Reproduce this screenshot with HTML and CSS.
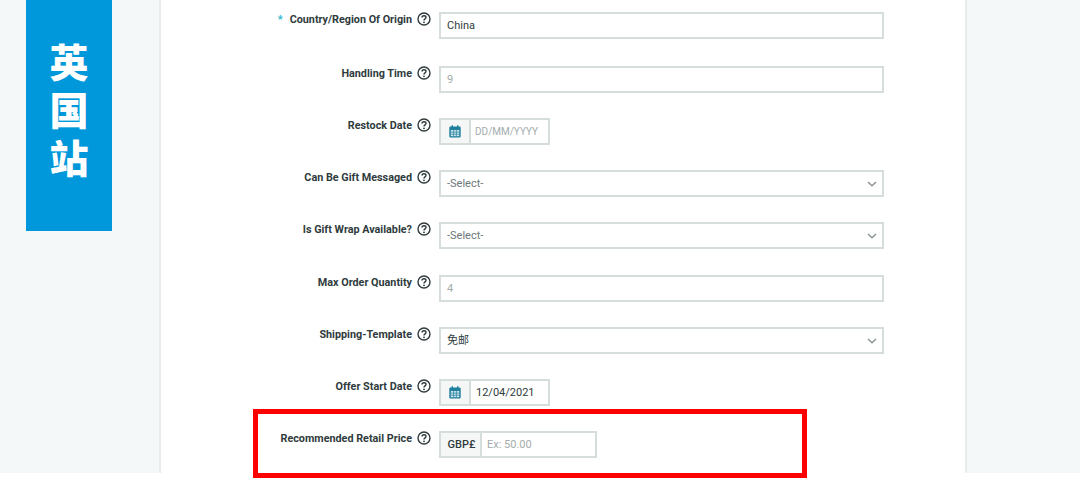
FILE: index.html
```html
<!DOCTYPE html>
<html lang="en">
<head>
<meta charset="utf-8">
<title>Offer details</title>
<link rel="stylesheet" href="styles.css">
</head>
<body>
<svg class="defs" width="0" height="0" aria-hidden="true">
  <symbol id="help" viewBox="0 0 14 14">
    <circle cx="7" cy="7" r="6" fill="none" stroke="#2f3b3d" stroke-width="1.4"/>
    <path d="M5 5.6c0-1.2.9-1.9 2-1.9s2 .7 2 1.700c0 1.500-2 1.500-2 3" fill="none" stroke="#2f3b3d" stroke-width="1.400"/>
    <circle cx="7" cy="10.300" r=".9" fill="#2f3b3d"/>
  </symbol>
  <symbol id="cal" viewBox="0 0 12 13">
    <path d="M1.500 1.500h9a1.200 1.200 0 0 1 1.200 1.200v8.600a1.200 1.200 0 0 1-1.200 1.200h-9A1.200 1.200 0 0 1 .3 11.300V2.700a1.200 1.200 0 0 1 1.200-1.200z" fill="#1f7f9c"/>
    <rect x="2.600" y=".2" width="1.400" height="2.300" fill="#1f7f9c"/>
    <rect x="8" y=".2" width="1.400" height="2.300" fill="#1f7f9c"/>
    <path d="M1.800 5h8.400v6.200H1.800z" fill="#cfe6ec"/>
    <path d="M1.800 7.100h8.400M1.800 9.200h8.400M4.600 5v6.200M7.400 5v6.200" stroke="#1f7f9c" stroke-width=".7"/>
  </symbol>
  <symbol id="chev" viewBox="0 0 10 6">
    <path d="M1 1l4 3.700L9 1" fill="none" stroke="#8c9698" stroke-width="1.500"/>
  </symbol>
</svg>

<div class="page">
  <aside class="gutter">
    <div class="banner"><span>英</span><span>国</span><span>站</span></div>
  </aside>

  <main class="panel">
    <form class="form">
      <div class="row row-54">
        <div class="label"><span class="req">*</span>Country/Region Of Origin</div>
        <svg class="help"><use href="#help"/></svg>
        <div class="field"><span class="value">China</span></div>
      </div>
      <div class="row row-52">
        <div class="label">Handling Time</div>
        <svg class="help"><use href="#help"/></svg>
        <div class="field"><span class="hint">9</span></div>
      </div>
      <div class="row row-52">
        <div class="label">Restock Date</div>
        <svg class="help"><use href="#help"/></svg>
        <div class="group group-date">
          <span class="addon"><svg class="cal"><use href="#cal"/></svg></span>
          <span class="hint hint-date">DD/MM/YYYY</span>
        </div>
      </div>
      <div class="row row-52">
        <div class="label">Can Be Gift Messaged</div>
        <svg class="help"><use href="#help"/></svg>
        <div class="field select"><span class="muted">-Select-</span><svg class="chev"><use href="#chev"/></svg></div>
      </div>
      <div class="row row-53">
        <div class="label">Is Gift Wrap Available?</div>
        <svg class="help"><use href="#help"/></svg>
        <div class="field select"><span class="muted">-Select-</span><svg class="chev"><use href="#chev"/></svg></div>
      </div>
      <div class="row row-52">
        <div class="label">Max Order Quantity</div>
        <svg class="help"><use href="#help"/></svg>
        <div class="field"><span class="hint">4</span></div>
      </div>
      <div class="row row-52">
        <div class="label">Shipping-Template</div>
        <svg class="help"><use href="#help"/></svg>
        <div class="field select"><span class="value">免邮</span><svg class="chev"><use href="#chev"/></svg></div>
      </div>
      <div class="row row-52">
        <div class="label">Offer Start Date</div>
        <svg class="help"><use href="#help"/></svg>
        <div class="group group-date">
          <span class="addon"><svg class="cal"><use href="#cal"/></svg></span>
          <span class="value value-date">12/04/2021</span>
        </div>
      </div>
      <div class="row row-52">
        <div class="label">Recommended Retail Price</div>
        <svg class="help"><use href="#help"/></svg>
        <div class="group group-price">
          <span class="addon addon-text">GBP£</span>
          <span class="hint hint-price">Ex: 50.00</span>
        </div>
      </div>
    </form>
  </main>

  <aside class="gutter-right"></aside>
</div>

<div class="highlight"></div>
</body>
</html>
```

FILE: styles.css
```css
* { box-sizing: border-box; }

html, body {
  margin: 0;
  height: 479px;
  overflow: hidden;
  background: #fff;
}

body {
  position: relative;
  font-family: Roboto, "Noto Sans CJK SC", sans-serif;
  color: #2f3b3d;
}

.defs { position: absolute; }

.page {
  display: flex;
  height: 473px;
  overflow: hidden;
  background: #f4f8f9;
}

.gutter {
  width: 159px;
  flex: none;
  padding-left: 26px;
}

.banner {
  display: flex;
  flex-direction: column;
  align-items: center;
  width: 86px;
  height: 231px;
  padding-top: 36px;
  background: #0098da;
  color: #fff;
  font-family: "Noto Sans CJK SC", sans-serif;
  font-size: 39px;
  font-weight: 900;
  line-height: 48px;
}

.panel {
  width: 808px;
  flex: none;
  background: #fff;
  border-left: 2px solid #e9eced;
  border-right: 2px solid #e9eced;
}

.gutter-right { flex: 1; }

.form {
  display: flex;
  flex-direction: column;
  padding-top: 12px;
}

.row {
  display: grid;
  grid-template-columns: 251px 14px 448px;
  column-gap: 5px;
  align-items: start;
  flex: none;
}
.row-54 { height: 54px; }
.row-53 { height: 53px; }
.row-52 { height: 52px; }

.label {
  text-align: right;
  font-size: 10.8px;
  font-weight: 700;
  line-height: 15px;
  white-space: nowrap;
}

.req {
  margin-right: 7px;
  color: #1fb5c9;
}

.help {
  width: 14px;
  height: 14px;
}

.field {
  display: flex;
  align-items: center;
  justify-content: space-between;
  grid-column: 3;
  margin-left: 3px;
  height: 27px;
  padding: 0 5px 0 6px;
  border: 2px solid #d6dddd;
  background: #fff;
  font-size: 11px;
  line-height: 14px;
}

.group {
  display: flex;
  align-items: stretch;
  margin-left: 3px;
  height: 27px;
  border: 2px solid #d6dddd;
  background: #fff;
  font-size: 11px;
  line-height: 14px;
}
.group-date { width: 111px; }
.group-price { width: 158px; }

.addon {
  display: flex;
  align-items: center;
  justify-content: center;
  width: 30px;
  flex: none;
  border-right: 2px solid #d6dddd;
  background: #f5f7f7;
}
.addon-text {
  width: 41px;
  padding-left: 2px;
  font-weight: 500;
  color: #2f3b3d;
}

.cal { width: 12px; height: 13px; }
.chev { width: 10px; height: 6px; }

.value { color: #2f3b3d; }
.muted { color: #6c7778; }
.hint { color: #a3acad; }

.hint-date, .value-date { align-self: center; padding-left: 5px; }
.hint-date { padding-left: 4px; font-size: 10px; }
.hint-price { align-self: center; padding-left: 5px; }

.highlight {
  position: absolute;
  left: 253px;
  top: 409px;
  width: 554px;
  height: 69px;
  border: 5px solid #fe0000;
}
```
